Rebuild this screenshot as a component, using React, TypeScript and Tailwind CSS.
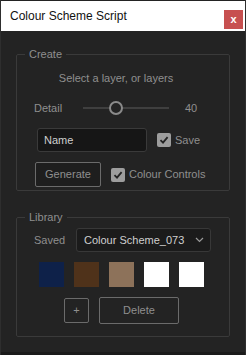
import React, { useState } from 'react';

const swatches = ['#0e2149', '#4f321a', '#8d725a', '#ffffff', '#ffffff'];

function Check({ checked, onClick }: { checked: boolean; onClick: () => void }) {
    return (
        <button
            onClick={onClick}
            className="w-[14px] h-[14px] rounded-[2px] bg-[#9d9d9d] flex items-center justify-center"
        >
            {checked && (
                <svg width="10" height="10" viewBox="0 0 10 10" fill="none">
                    <path d="M1.5 5.2 L4 7.6 L8.6 2.2" stroke="#232323" strokeWidth="1.8" />
                </svg>
            )}
        </button>
    );
}

export default function App() {
    const [detail] = useState(40);
    const [save, setSave] = useState(true);
    const [controls, setControls] = useState(true);

    return (
        <div
            className="w-[246px] h-[355px] bg-[#232323] border-x border-[#2e2e2e] flex flex-col text-[11px] text-[#8f8f8f]"
            style={{ fontFamily: '"Liberation Sans", Arial, sans-serif' }}
        >
            <div className="h-[30px] mt-px bg-white flex items-center justify-between pl-[9px] pr-[2px]">
                <span className="text-[12px] text-[#111] leading-none">Colour Scheme Script</span>
                <button className="w-[19px] h-[19px] bg-[#c75050] text-white text-[11px] font-bold leading-none flex items-center justify-center mt-[6px]">
                    x
                </button>
            </div>

            <fieldset className="mx-[15px] mt-[15px] h-[145px] border border-[#3a3a3a] rounded-[2px]">
                <legend className="ml-2 px-1 leading-[16px]">Create</legend>
                <div className="text-center mt-[8px] leading-[16px] pr-[14px]">Select a layer, or layers</div>
                <div className="flex items-center mt-[14px] h-[16px]">
                    <span className="ml-[17px] w-[49px]">Detail</span>
                    <div className="relative w-[86px] h-[14px] flex items-center">
                        <div className="w-full h-[2px] bg-[#3f3f3f]" />
                        <div className="absolute left-[26px] w-[14px] h-[14px] rounded-full border-2 border-[#8a8a8a] bg-[#232323]" />
                    </div>
                    <span className="ml-[16px]">{detail}</span>
                </div>
                <div className="flex items-center mt-[12px]">
                    <div className="ml-[20px] w-[110px] h-[24px] bg-[#161616] border border-[#3a3a3a] rounded-[3px] flex items-center pl-[6px] text-[#cfcfcf]">
                        Name
                    </div>
                    <div className="ml-[10px] flex items-center gap-[4px]">
                        <Check checked={save} onClick={() => setSave(!save)} />
                        <span>Save</span>
                    </div>
                </div>
                <div className="flex items-center mt-[10px]">
                    <button className="ml-[18px] w-[66px] h-[25px] border border-[#6b6b6b] rounded-[2px] bg-[#1e1e1e] text-[#8f8f8f]">
                        Generate
                    </button>
                    <div className="ml-[10px] flex items-center gap-[4px]">
                        <Check checked={controls} onClick={() => setControls(!controls)} />
                        <span>Colour Controls</span>
                    </div>
                </div>
            </fieldset>

            <fieldset className="mx-[15px] mt-[18px] h-[128px] border border-[#3a3a3a] rounded-[2px]">
                <legend className="ml-2 px-1 leading-[16px]">Library</legend>
                <div className="flex items-center mt-[3px]">
                    <span className="ml-[17px] w-[42px]">Saved</span>
                    <div className="w-[135px] h-[24px] bg-[#1b1b1b] border border-[#383838] rounded-[3px] flex items-center justify-between pl-[7px] pr-[6px] text-[#cfcfcf]">
                        <span className="whitespace-nowrap">Colour Scheme_073</span>
                        <svg width="9" height="6" viewBox="0 0 9 6" fill="none">
                            <path d="M1 1 L4.5 4.5 L8 1" stroke="#9a9a9a" strokeWidth="1.2" />
                        </svg>
                    </div>
                </div>
                <div className="flex gap-[10px] ml-[22px] mt-[10px]">
                    {swatches.map((c, i) => (
                        <div key={i} className="w-[25px] h-[25px]" style={{ backgroundColor: c }} />
                    ))}
                </div>
                <div className="flex items-center ml-[47px] mt-[10px] gap-[10px]">
                    <button className="w-[25px] h-[25px] border border-[#6b6b6b] rounded-[2px] text-[#8f8f8f] leading-none">+</button>
                    <button className="w-[80px] h-[27px] border border-[#6b6b6b] rounded-[2px] text-[#8f8f8f]">Delete</button>
                </div>
            </fieldset>
            <div className="flex-1" />
            <div className="h-[3px] bg-[#1a1a1a]" />
        </div>
    );
}
